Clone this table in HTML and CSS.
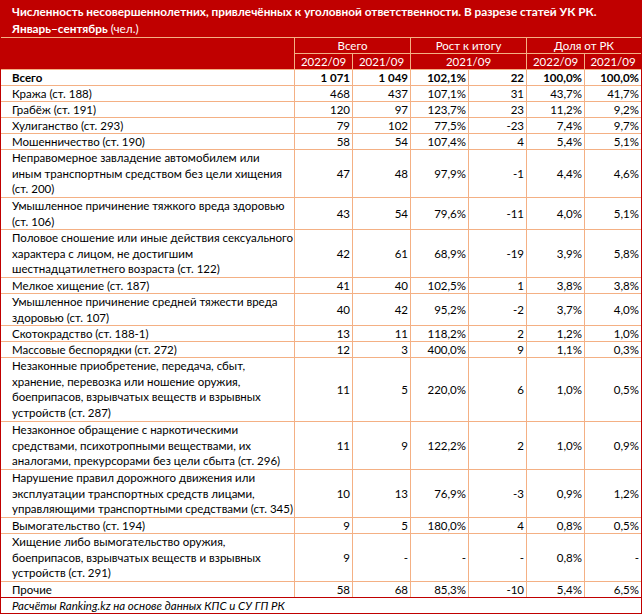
FILE: index.html
```html
<!DOCTYPE html>
<html lang="ru"><head><meta charset="utf-8"><title>Таблица</title><link rel="stylesheet" href="styles.css"></head>
<body>
<div class="sheet">
  <div class="title">
    <div class="title-line"><b>Численность несовершеннолетних, привлечённых к уголовной ответственности. В разрезе статей УК РК.</b></div>
    <div class="title-line"><b>Январь–сентябрь</b> (чел.)</div>
  </div>
  <div class="grid">
    <div class="hd corner"></div>
    <div class="hd span2">Всего</div>
    <div class="hd span2">Рост к итогу</div>
    <div class="hd span2">Доля от РК</div>
    <div class="hd">2022/09</div>
    <div class="hd">2021/09</div>
    <div class="hd span2">2021/09</div>
    <div class="hd">2022/09</div>
    <div class="hd">2021/09</div>

    <div class="lb total">Всего</div><div class="nm total">1 071</div><div class="nm total">1 049</div><div class="nm total">102,1%</div><div class="nm total">22</div><div class="nm total">100,0%</div><div class="nm total">100,0%</div>

    <div class="lb">Кража (ст. 188)</div><div class="nm">468</div><div class="nm">437</div><div class="nm">107,1%</div><div class="nm">31</div><div class="nm">43,7%</div><div class="nm">41,7%</div>

    <div class="lb">Грабёж (ст. 191)</div><div class="nm">120</div><div class="nm">97</div><div class="nm">123,7%</div><div class="nm">23</div><div class="nm">11,2%</div><div class="nm">9,2%</div>

    <div class="lb">Хулиганство (ст. 293)</div><div class="nm">79</div><div class="nm">102</div><div class="nm">77,5%</div><div class="nm">-23</div><div class="nm">7,4%</div><div class="nm">9,7%</div>

    <div class="lb">Мошенничество (ст. 190)</div><div class="nm">58</div><div class="nm">54</div><div class="nm">107,4%</div><div class="nm">4</div><div class="nm">5,4%</div><div class="nm">5,1%</div>

    <div class="lb n3">Неправомерное завладение автомобилем или<br>иным транспортным средством без цели хищения<br>(ст. 200)</div><div class="nm">47</div><div class="nm">48</div><div class="nm">97,9%</div><div class="nm">-1</div><div class="nm">4,4%</div><div class="nm">4,6%</div>

    <div class="lb n2">Умышленное причинение тяжкого вреда здоровью<br>(ст. 106)</div><div class="nm">43</div><div class="nm">54</div><div class="nm">79,6%</div><div class="nm">-11</div><div class="nm">4,0%</div><div class="nm">5,1%</div>

    <div class="lb n3">Половое сношение или иные действия сексуального<br>характера с лицом, не достигшим<br>шестнадцатилетнего возраста (ст. 122)</div><div class="nm">42</div><div class="nm">61</div><div class="nm">68,9%</div><div class="nm">-19</div><div class="nm">3,9%</div><div class="nm">5,8%</div>

    <div class="lb">Мелкое хищение (ст. 187)</div><div class="nm">41</div><div class="nm">40</div><div class="nm">102,5%</div><div class="nm">1</div><div class="nm">3,8%</div><div class="nm">3,8%</div>

    <div class="lb n2">Умышленное причинение средней тяжести вреда<br>здоровью (ст. 107)</div><div class="nm">40</div><div class="nm">42</div><div class="nm">95,2%</div><div class="nm">-2</div><div class="nm">3,7%</div><div class="nm">4,0%</div>

    <div class="lb">Скотокрадство (ст. 188-1)</div><div class="nm">13</div><div class="nm">11</div><div class="nm">118,2%</div><div class="nm">2</div><div class="nm">1,2%</div><div class="nm">1,0%</div>

    <div class="lb">Массовые беспорядки (ст. 272)</div><div class="nm">12</div><div class="nm">3</div><div class="nm">400,0%</div><div class="nm">9</div><div class="nm">1,1%</div><div class="nm">0,3%</div>

    <div class="lb n4">Незаконные приобретение, передача, сбыт,<br>хранение, перевозка или ношение оружия,<br>боеприпасов, взрывчатых веществ и взрывных<br>устройств (ст. 287)</div><div class="nm">11</div><div class="nm">5</div><div class="nm">220,0%</div><div class="nm">6</div><div class="nm">1,0%</div><div class="nm">0,5%</div>

    <div class="lb n3">Незаконное обращение с наркотическими<br>средствами, психотропными веществами, их<br>аналогами, прекурсорами без цели сбыта (ст. 296)</div><div class="nm">11</div><div class="nm">9</div><div class="nm">122,2%</div><div class="nm">2</div><div class="nm">1,0%</div><div class="nm">0,9%</div>

    <div class="lb n3">Нарушение правил дорожного движения или<br>эксплуатации транспортных средств лицами,<br>управляющими транспортными средствами (ст. 345)</div><div class="nm">10</div><div class="nm">13</div><div class="nm">76,9%</div><div class="nm">-3</div><div class="nm">0,9%</div><div class="nm">1,2%</div>

    <div class="lb">Вымогательство (ст. 194)</div><div class="nm">9</div><div class="nm">5</div><div class="nm">180,0%</div><div class="nm">4</div><div class="nm">0,8%</div><div class="nm">0,5%</div>

    <div class="lb n3">Хищение либо вымогательство оружия,<br>боеприпасов, взрывчатых веществ и взрывных<br>устройств (ст. 291)</div><div class="nm">9</div><div class="nm">-</div><div class="nm">-</div><div class="nm">-</div><div class="nm">0,8%</div><div class="nm">-</div>

    <div class="lb">Прочие</div><div class="nm">58</div><div class="nm">68</div><div class="nm">85,3%</div><div class="nm">-10</div><div class="nm">5,4%</div><div class="nm">6,5%</div>
  </div>
  <div class="foot">Расчёты Ranking.kz на основе данных КПС и СУ ГП РК</div>
</div>
</body></html>
```
FILE: styles.css
```css
html, body {
  margin: 0;
  padding: 0;
  background: #ffffff;
}
.sheet {
  width: 642px;
  box-sizing: border-box;
  border-left: 1px solid #c00000;
  border-right: 1px solid #c00000;
  font-family: Lato, "Liberation Sans", sans-serif;
  font-size: 11.5px;
  color: #000000;
}
.title {
  height: 37px;
  box-sizing: border-box;
  background: #c00000;
  color: #ffffff;
  padding: 3px 0 0 11px;
  font-size: 11.8px;
  line-height: 17px;
  white-space: nowrap;
}
.title-line b {
  font-weight: bold;
}
.grid {
  display: grid;
  grid-template-columns: 293px repeat(5, 57px) 56px;
  gap: 1px;
  background: #f4b084;
  border-top: 1px solid #f4b084;
}
.hd {
  background: #c00000;
  color: #ffffff;
  height: 15px;
  line-height: 15px;
  text-align: center;
  white-space: nowrap;
}
.corner {
  grid-row: span 2;
  height: auto;
}
.span2 {
  grid-column: span 2;
}
.lb {
  background: #ffffff;
  height: 15px;
  line-height: 15.67px;
  padding-left: 11px;
  white-space: nowrap;
  overflow: visible;
}
.n2 { height: 31px; }
.n3 { height: 47px; }
.n4 { height: 63px; }
.nm {
  background: #ffffff;
  display: flex;
  align-items: center;
  justify-content: flex-end;
  padding-right: 2px;
  white-space: nowrap;
  line-height: 15px;
}
.total {
  font-weight: bold;
}
.foot {
  height: 15px;
  line-height: 15px;
  border-top: 1px solid #c00000;
  border-bottom: 1px solid #c00000;
  padding-left: 11px;
  font-style: italic;
  white-space: nowrap;
}
```
